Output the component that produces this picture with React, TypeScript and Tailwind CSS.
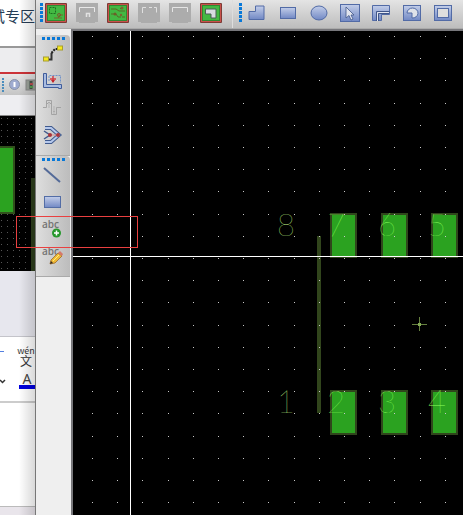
import type { ReactNode } from "react";

const sans = "font-['Open_Sans','Noto_Sans','Noto_Sans_CJK_SC',sans-serif]";

function Svg({ children, className }: { children: ReactNode; className?: string }) {
  return (
    <svg viewBox="0 0 22 20" width="22" height="20" className={className} aria-hidden="true">
      {children}
    </svg>
  );
}

function Board({ children }: { children: ReactNode }) {
  return (
    <Svg>
      <rect x="0" y="0" width="22" height="20" rx="1" fill="#7d3a35" />
      <rect x="1.5" y="1.5" width="19" height="17" fill="#43b842" stroke="#c9504a" />
      <rect x="2.5" y="2.5" width="17" height="15" fill="none" stroke="#2f8a31" />
      {children}
    </Svg>
  );
}

function Disabled({ children }: { children: ReactNode }) {
  return (
    <Svg>
      <path d="M0 0H22V19H19V20H3V19H0Z" fill="#acacac" />
      {children}
    </Svg>
  );
}

function Gradient({ id }: { id: string }) {
  return (
    <defs>
      <linearGradient id={id} x1="0" y1="0" x2="0" y2="1">
        <stop offset="0" stopColor="#c3cee9" />
        <stop offset="1" stopColor="#7188c4" />
      </linearGradient>
    </defs>
  );
}

const boardTools = [
  {
    name: "Show board",
    icon: (
      <Board>
        <rect x="4.5" y="4.5" width="6" height="6" fill="none" stroke="#1d6f20" strokeDasharray="2 1" />
        <path d="M9 15h4l2-3h3M13 15h4" fill="none" stroke="#6f6a2c" />
        <circle cx="14" cy="12" r="1.5" fill="none" stroke="#7a5a2c" />
      </Board>
    ),
  },
  {
    name: "Save board",
    icon: (
      <Disabled>
        <path d="M3.5 9V4.5H18.5V9" fill="none" stroke="#e8e8e8" />
        <path d="M10.500 14V10.5H13.500V14" fill="none" stroke="#e2e2e2" strokeWidth="1.5" />
      </Disabled>
    ),
  },
  {
    name: "Show traces",
    icon: (
      <Board>
        <path d="M4 6h5l3 2h6M4 11h5l2 3h3M13 6l2-2M15 14h3" fill="none" stroke="#596a27" />
        <circle cx="15" cy="5" r="1.5" fill="#7a6430" />
        <circle cx="8" cy="11" r="1.5" fill="#6c5f29" />
        <circle cx="14" cy="12" r="1.2" fill="#7a6430" />
      </Board>
    ),
  },
  {
    name: "Group",
    icon: (
      <Disabled>
        <path d="M4.5 10V4.5H8M11 4.5h3M16 4.500h2.500v5" fill="none" stroke="#e0e0e0" />
      </Disabled>
    ),
  },
  {
    name: "Region",
    icon: (
      <Disabled>
        <path d="M3.5 9V4.500H18.500V9" fill="none" stroke="#e5e5e5" />
      </Disabled>
    ),
  },
  {
    name: "Copper area",
    icon: (
      <Board>
        <path d="M5.5 6H16V15H11V11H5.5Z" fill="#d7dce0" stroke="#4b5f55" />
      </Board>
    ),
  },
];

const shapeTools = [
  {
    name: "Polygon",
    icon: (
      <Svg>
        <Gradient id="poly" />
        <path d="M3 8.500H9.500V3H18V16.500H3Z" fill="url(#poly)" stroke="#526ba6" />
      </Svg>
    ),
  },
  {
    name: "Rectangle",
    icon: (
      <Svg>
        <Gradient id="rect" />
        <rect x="3.5" y="4.500" width="15" height="11" fill="url(#rect)" stroke="#526ba6" />
      </Svg>
    ),
  },
  {
    name: "Circle",
    icon: (
      <Svg>
        <Gradient id="circ" />
        <ellipse cx="11" cy="10" rx="8" ry="7" fill="url(#circ)" stroke="#526ba6" />
      </Svg>
    ),
  },
  {
    name: "Select",
    icon: (
      <Svg>
        <Gradient id="sel" />
        <rect x="1.5" y="1.500" width="19" height="17" fill="url(#sel)" stroke="#526ba6" />
        <path d="M7 4V15L10 12.500 12 17 14 16 12 12H15Z" fill="#e2e5ee" stroke="#405689" strokeWidth="0.8" />
      </Svg>
    ),
  },
  {
    name: "Path area",
    icon: (
      <Svg>
        <Gradient id="path" />
        <path d="M2.500 2.500H19.500V11.500H11.500V17.500H2.500Z" fill="url(#path)" stroke="#526ba6" />
        <path d="M6.500 18V8.500H19.500" fill="none" stroke="#405689" />
        <path d="M7.500 18V9.500H19" fill="none" stroke="#e5e8f2" />
        <path d="M8.500 18V10.500H19" fill="none" stroke="#405689" />
      </Svg>
    ),
  },
  {
    name: "Arc area",
    icon: (
      <Svg>
        <Gradient id="arc" />
        <rect x="2.500" y="2.500" width="17" height="15" fill="url(#arc)" stroke="#526ba6" />
        <path d="M6 10A5.500 5 0 1 1 11 15V10H6Z" fill="#dfe2e8" stroke="#526ba6" />
      </Svg>
    ),
  },
  {
    name: "Frame",
    icon: (
      <Svg>
        <Gradient id="frame" />
        <rect x="2.500" y="2.500" width="17" height="15" fill="url(#frame)" stroke="#526ba6" />
        <rect x="5.500" y="5.500" width="11" height="9" fill="#dedede" stroke="#526ba6" />
      </Svg>
    ),
  },
];

const routeTools = [
  {
    name: "Route",
    icon: (
      <Svg>
        <path d="M6 15.500H9.500V9" fill="none" stroke="#333" strokeWidth="2" />
        <path d="M9.500 9L13 5H16" fill="none" stroke="#222" strokeWidth="2" strokeDasharray="2 1" />
        <rect x="1.500" y="13" width="5" height="4" fill="#f5e91e" stroke="#a79d2e" />
        <rect x="15.500" y="2" width="5" height="4" fill="#f5e91e" stroke="#a79d2e" />
      </Svg>
    ),
  },
  {
    name: "Push route",
    icon: (
      <Svg>
        <path d="M7 10V4.500H18.500V12" fill="none" stroke="#6f91c8" strokeDasharray="2 1" />
        <path d="M1.500 2.500H4.500V13.500H19.500V17.500H16.500V16.500H1.500Z" fill="#a9bce1" stroke="#405d9b" />
        <path d="M11 5V11M8 8H14" stroke="#d43d43" strokeWidth="1.500" />
        <path d="M9 9H13L11 12Z" fill="#c3222a" />
      </Svg>
    ),
  },
  {
    name: "Tune length",
    icon: (
      <Svg>
        <path d="M1 9.500H4.500V2.500H9.500V16.500H14.500V9.500H19M11 13.500H13M5 6L7 4 9 6" fill="none" stroke="#a3a3a3" />
        <path d="M7 4V10M12 8V16" stroke="#b3b3b3" />
      </Svg>
    ),
  },
  {
    name: "Differential pair",
    icon: (
      <Svg>
        <path d="M3 3H9L17 10 9 17H3" fill="none" stroke="#405a8d" strokeWidth="4" />
        <path d="M3 3H9L17 10 9 17H3" fill="none" stroke="#b5c8ec" strokeWidth="2" />
        <path d="M2 6L8 10 2 14" fill="none" stroke="#405a8d" strokeWidth="1.500" />
        <path d="M6 10H17" stroke="#d7898b" />
        <circle cx="8" cy="10" r="2" fill="#aa343b" />
        <circle cx="16" cy="10" r="2" fill="#aa343b" />
      </Svg>
    ),
  },
];

const drawTools = [
  {
    name: "Line",
    icon: (
      <Svg>
        <path d="M2 3L18 17" stroke="#536a98" strokeWidth="2" />
      </Svg>
    ),
  },
  {
    name: "Draw rectangle",
    icon: (
      <Svg>
        <Gradient id="drawrect" />
        <rect x="2.500" y="4.500" width="16" height="11" fill="url(#drawrect)" stroke="#536da6" />
      </Svg>
    ),
  },
  {
    name: "Add text",
    icon: (
      <Svg className="overflow-visible">
        <text x="0" y="9" fontSize="10" fontWeight="600" fill="#747474">abc</text>
        <circle cx="14.500" cy="14" r="4.500" fill="#25982c" />
        <path d="M12 14H17M14.500 11.500V16.500" stroke="white" strokeWidth="1.500" />
      </Svg>
    ),
  },
  {
    name: "Edit text",
    icon: (
      <Svg className="overflow-visible">
        <text x="0" y="9" fontSize="10" fontWeight="600" fill="#747474">abc</text>
        <path d="M9 14L16 7 20 10 13 17 8 18Z" fill="#efb936" stroke="#9b682c" strokeWidth="0.8" />
        <path d="M16 7L18 5 21 8 20 10Z" fill="#d57869" />
        <path d="M8 18L9 15 11 17Z" fill="#342b22" />
        <path d="M11 15L17 9" stroke="#fff078" />
      </Svg>
    ),
  },
];

type Tool = { name: string; icon: ReactNode };

function ToolButtons({ tools }: { tools: Tool[] }) {
  return tools.map((tool) => (
    <button key={tool.name} type="button" aria-label={tool.name} className="h-5 w-[22px] shrink-0">
      {tool.icon}
    </button>
  ));
}

function TopGrip() {
  return (
    <span className="flex shrink-0 flex-col gap-px">
      {[0, 1, 2, 3, 4].map((n) => (
        <i key={n} className="h-[3px] w-[3px] bg-[#0878d8]" />
      ))}
    </span>
  );
}

function SideGroup({ tools }: { tools: Tool[] }) {
  return (
    <div className="flex h-[121px] w-[34px] flex-col items-center rounded-tr border-b border-[#aaa] bg-linear-to-r from-[#dedede] to-[#bcbcbc] pt-[2px]">
      <span className="mb-1 flex gap-[2px]">
        {[0, 1, 2, 3, 4].map((n) => (
          <i key={n} className="h-[3px] w-[3px] bg-[#0878d8]" />
        ))}
      </span>
      <div className="flex flex-col gap-[7px]">
        <ToolButtons tools={tools} />
      </div>
    </div>
  );
}

const columns = Array.from({ length: 60 }, (_, i) => Math.round(19 + i * 25.2));
const rows = Array.from({ length: 50 }, (_, i) => Math.round(5 + i * 22.2));
const pads = [
  { n: "7", x: 257, y: 182 },
  { n: "6", x: 308, y: 182 },
  { n: "5", x: 358, y: 182 },
  { n: "2", x: 257, y: 359 },
  { n: "3", x: 308, y: 359 },
  { n: "4", x: 358, y: 359 },
];

function PcbCanvas() {
  return (
    <svg className="absolute inset-0 h-full w-full bg-black" role="img" aria-label="Footprint">
      <rect x="244" y="205" width="4" height="177" fill="#31451c" />
      {pads.map((pad) => (
        <rect key={pad.n} x={pad.x + 1} y={pad.y + 1} width="25" height="43" fill="#2ba220" stroke="#30451c" strokeWidth="2" />
      ))}
      <g className="font-['Lato',sans-serif] font-thin" fontSize="31" textAnchor="middle">
        <text x="213" y="205" fill="#c8ff8c">8</text>
        <text x="213" y="382" fill="#c8ff8c">1</text>
        {pads.map((pad) => (
          <text key={pad.n} x={pad.x + 6} y={pad.y + 23} fill="#8cff5c">{pad.n}</text>
        ))}
      </g>
      <g fill="#c8c8c8">
        {rows.map((y) => columns.map((x) => <rect key={`${x}-${y}`} x={x} y={y} width="1" height="1" />))}
      </g>
      <rect x="339" y="293" width="15" height="1" fill="#66813f" />
      <rect x="346" y="286" width="1" height="14" fill="#66813f" />
      <rect x="345" y="292" width="3" height="3" fill="#86ac58" />
      <rect x="57" y="0" width="1" height="100%" fill="#fff" />
      <rect x="0" y="225" width="100%" height="1" fill="#fff" />
    </svg>
  );
}

function BackgroundWindow() {
  return (
    <aside className="relative flex w-9 shrink-0 flex-col overflow-hidden border-r border-[#777] bg-white">
      <div className="flex h-[46px] shrink-0 justify-end whitespace-nowrap pt-[5px] font-['Noto_Sans_CJK_SC',sans-serif] text-[15px] leading-[22px] text-[#263d56]">
        试专区
      </div>
      <div className="h-[26px] shrink-0 border-t-2 border-[#999] bg-[#ededef]" />
      <div className="flex h-[23px] shrink-0 items-center gap-1 border-t-2 border-[#cc3439] bg-linear-to-b from-[#e7e7e7] to-[#c5c5c5] pl-[2px]">
        <span className="flex flex-col gap-px">
          {[0, 1, 2, 3, 4].map((n) => <i key={n} className="h-[2px] w-[2px] bg-[#4b8dbd]" />)}
        </span>
        <svg width="13" height="13" viewBox="0 0 13 13" className="shrink-0" aria-hidden="true">
          <circle cx="6.500" cy="6.500" r="5" fill="#9eabd0" stroke="#8993a8" />
          <path d="M6.500 4V9" stroke="white" strokeWidth="2" />
        </svg>
        <svg width="14" height="12" viewBox="0 0 14 12" className="shrink-0" aria-hidden="true">
          <rect x="1" y="1" width="13" height="10" fill="#9aa198" stroke="#888" />
          <path d="M6 2V10" stroke="#47534a" strokeWidth="3" />
          <rect x="5" y="4" width="3" height="2" fill="#ba5053" />
          <rect x="5" y="7" width="3" height="2" fill="#55a052" />
        </svg>
      </div>
      <div className="h-[21px] shrink-0 border-b border-[#888] bg-[#eeeef1]" />
      <svg className="h-[155px] w-full shrink-0 bg-black" aria-hidden="true">
        <defs>
          <pattern id="fine-grid" width="6" height="6" patternUnits="userSpaceOnUse">
            <rect x="1" y="2" width="1" height="1" fill="#555" />
          </pattern>
        </defs>
        <rect width="100%" height="100%" fill="url(#fine-grid)" />
        <rect x="-4" y="31" width="18" height="66" fill="#2ba220" stroke="#31501c" strokeWidth="2" />
        <rect x="31" y="62" width="5" height="93" fill="#2d3e1d" />
      </svg>
      <div className="h-[66px] shrink-0 border-b border-[#c4c4ca] bg-[#e7e7ee]" />
      <div className="flex h-[66px] shrink-0 flex-col border-b-2 border-[#ccc] pt-[8px]">
        <div className="flex h-7 shrink-0">
          <span className="mt-[6px] h-px w-[5px] bg-[#537fe0]" />
          <span className="ml-[13px] w-[18px] shrink-0 text-center font-['Noto_Sans_CJK_SC',sans-serif] text-[#333]">
            <span className="block text-[9px] leading-[11px]">wén</span>
            <span className="block text-[12px] leading-[9px]">文</span>
          </span>
        </div>
        <div className="flex shrink-0 items-center">
          <svg width="6" height="5" viewBox="0 0 6 5" className="shrink-0" aria-hidden="true">
            <path d="M0 1L2.500 3.500 5 1" fill="none" stroke="#333" strokeWidth="1.500" />
          </svg>
          <span className="ml-[13px] h-[16px] w-4 shrink-0 border-b-4 border-[#0000df] text-center font-['Noto_Sans',sans-serif] text-[14px] leading-[12px] text-[#444]">
            A
          </span>
        </div>
      </div>
      <div className="h-[104px] shrink-0 border-b border-[#bbb]" />
      <div className="flex-1 bg-[#e9e5eb]" />
      <div className="absolute inset-y-0 right-0 w-4 bg-linear-to-r from-transparent to-black/15" />
    </aside>
  );
}

export default function App() {
  return (
    <div className={`relative flex h-screen overflow-hidden bg-[#efefef] ${sans}`}>
      <BackgroundWindow />
      <main className="flex min-w-0 flex-1 flex-col">
        <header className="flex h-[29px] shrink-0 overflow-hidden border-b border-[#aaa] bg-linear-to-b from-[#e4e4e4] to-[#bdbdbd] pt-[3px]" role="toolbar" aria-label="Main tools">
          <div className="flex shrink-0 items-start gap-[9px] pl-1 pr-[10px]">
            <span className="-mr-[7px]"><TopGrip /></span>
            <ToolButtons tools={boardTools} />
          </div>
          <div className="-mt-[3px] flex shrink-0 items-start gap-[9px] border-l border-[#ddd] pl-[6px] pt-[3px]">
            <span className="-mr-[5px]"><TopGrip /></span>
            <ToolButtons tools={shapeTools} />
          </div>
        </header>
        <div className="flex min-h-0 flex-1">
          <nav className="flex w-[35px] shrink-0 flex-col pt-[6px]" aria-label="Drawing tools">
            <SideGroup tools={routeTools} />
            <SideGroup tools={drawTools} />
          </nav>
          <section className="relative min-w-0 flex-1 border-l-2 border-t-2 border-[#77777b]">
            <PcbCanvas />
          </section>
        </div>
      </main>
      <div className="pointer-events-none absolute left-4 top-[216px] h-8 w-[122px] border border-[#e94040]" />
    </div>
  );
}
